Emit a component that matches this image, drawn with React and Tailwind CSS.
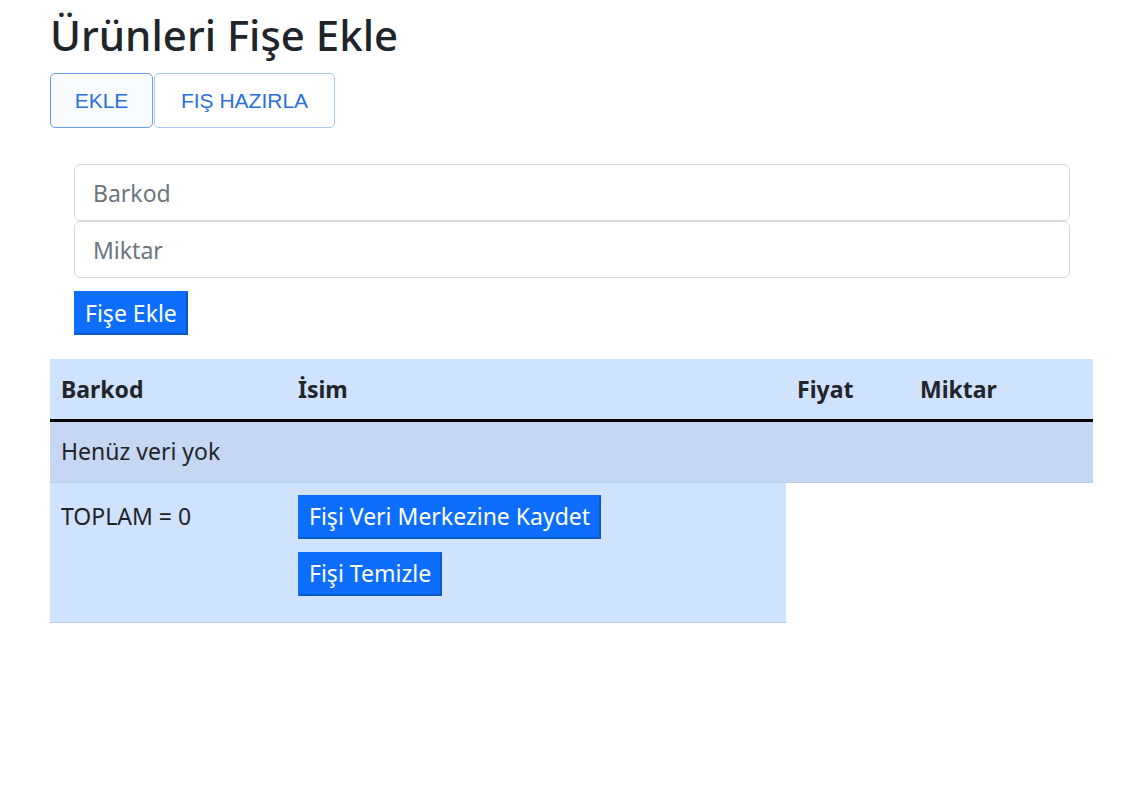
import React from 'react';

const font = { fontFamily: '"Noto Sans", "DejaVu Sans", sans-serif' };

const App = () => {
  return (
    <div className="min-h-[802px] bg-white px-[50px] text-[#212529]" style={font}>
      <h1 className="pt-[10px] text-[42px] font-medium leading-[50px]">Ürünleri Fişe Ekle</h1>

      <div className="mt-[13px] flex" style={{ fontFamily: '"Liberation Sans", Arial, sans-serif' }}>
        <button className="h-[55px] w-[103px] rounded-[5px] border border-[#6b9ee8] bg-[#f8fbff] text-[21px] text-[#2a6fe0]">
          EKLE
        </button>
        <button className="ml-px h-[55px] w-[181px] rounded-[5px] border border-[#a9c8f3] bg-white text-[21px] text-[#2a6fe0]">
          FIŞ HAZIRLA
        </button>
      </div>

      <div className="mt-[36px] px-[24px]">
        <input
          placeholder="Barkod"
          className="block h-[57px] w-[996px] rounded-[6px] border border-[#d6d9dd] px-[18px] text-[23px] outline-none placeholder:text-[#6c757d]"
        />
        <input
          placeholder="Miktar"
          className="block h-[57px] w-[996px] rounded-[6px] border border-[#d6d9dd] px-[18px] text-[23px] outline-none placeholder:text-[#6c757d]"
        />
        <button className="mt-[13px] h-[44px] border-2 border-[#0d6efd] border-b-[#0a58ca] border-r-[#0a58ca] bg-[#0d6efd] px-[9px] text-[23px] leading-none text-white">
          Fişe Ekle
        </button>
      </div>

      <table className="mt-[24px] w-[1043px] border-collapse text-[23px]">
        <colgroup>
          <col className="w-[237px]" />
          <col className="w-[499px]" />
          <col className="w-[123px]" />
          <col className="w-[184px]" />
        </colgroup>
        <thead>
          <tr className="h-[61px] border-b-[3px] border-black bg-[#cfe2ff] text-left">
            <th className="px-[11px] font-bold">Barkod</th>
            <th className="px-[11px] font-bold">İsim</th>
            <th className="px-[11px] font-bold">Fiyat</th>
            <th className="px-[11px] font-bold">Miktar</th>
          </tr>
        </thead>
        <tbody>
          <tr className="h-[62px] border-b border-[#b9cce8] bg-[#c5d7f2]">
            <td colSpan={4} className="px-[11px]">Henüz veri yok</td>
          </tr>
          <tr>
            <td className="border-b border-[#b9cce8] bg-[#cfe2ff] px-[11px] pb-[26px] pt-[16px] align-top">TOPLAM = 0</td>
            <td className="border-b border-[#b9cce8] bg-[#cfe2ff] px-[11px] pb-[26px] pt-[12px] align-top">
              <div className="flex flex-col items-start gap-[13px]">
                <button className="h-[44px] border-2 border-[#0d6efd] border-b-[#0a58ca] border-r-[#0a58ca] bg-[#0d6efd] px-[9px] leading-none text-white">
                  Fişi Veri Merkezine Kaydet
                </button>
                <button className="h-[44px] border-2 border-[#0d6efd] border-b-[#0a58ca] border-r-[#0a58ca] bg-[#0d6efd] px-[9px] leading-none text-white">
                  Fişi Temizle
                </button>
              </div>
            </td>
            <td className="bg-white"></td>
            <td className="bg-white"></td>
          </tr>
        </tbody>
      </table>
    </div>
  );
};

export default App;
